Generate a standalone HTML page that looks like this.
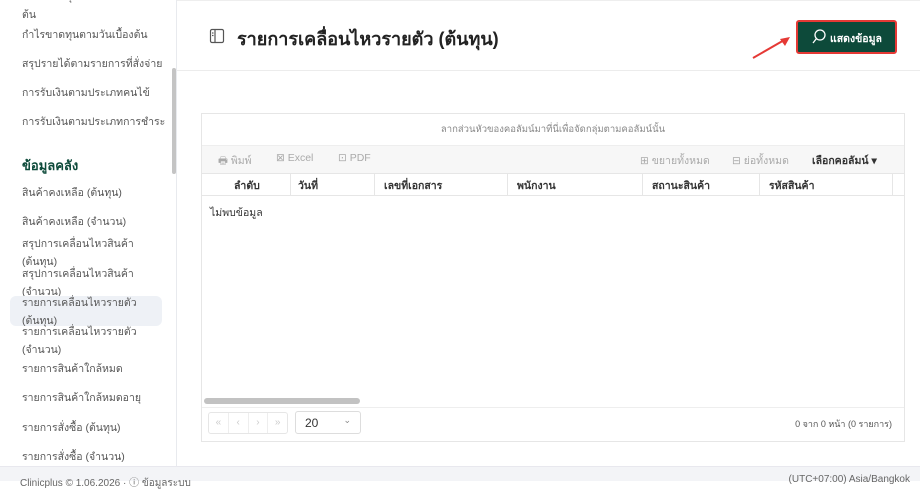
<!DOCTYPE html>
<html><head><meta charset="utf-8"><style>
*{box-sizing:border-box;margin:0;padding:0}
body{width:920px;height:481px;overflow:hidden;background:#fff;font-family:"Liberation Sans",sans-serif;position:relative;color:#333}
.side{position:absolute;left:0;top:0;width:177px;height:466px;border-right:1px solid #e8eaee;background:#fff}
.side .it{position:absolute;left:22px;font-size:10.5px;color:#555;line-height:18px}
.side .hd{position:absolute;left:22px;top:155px;font-size:13px;font-weight:bold;color:#0d4a3a}
.sel{position:absolute;left:10px;top:296px;width:152px;height:30px;background:#eef1f6;border-radius:6px}
.sb{position:absolute;left:172px;top:68px;width:4px;height:106px;background:#c4c4c4;border-radius:2px}
.hdr{position:absolute;left:177px;top:0;right:0;height:71px;border-bottom:1px solid #ececec;border-top:1px solid #eee}
.title{position:absolute;left:237px;top:24px;font-size:18px;font-weight:bold;color:#222}
.btn{position:absolute;left:796px;top:20px;width:101px;height:34px;background:#0d4a3a;border:2px solid #e53935;border-radius:3px;color:#fff;font-size:10.5px;font-weight:bold;padding:8px 0 0 32px}
.tbl{position:absolute;left:201px;top:113px;width:704px;height:329px;border:1px solid #e6e6e6}
.grp{height:32px;border-bottom:1px solid #eee;text-align:center;font-size:9.5px;color:#888;line-height:32px}
.tb{height:27px;background:#f7f7f7;font-size:10.5px;color:#aaa;position:relative}
.tb span{position:absolute;top:6px}
.th{height:23px;border-top:1px solid #e6e6e6;border-bottom:1px solid #e6e6e6;position:relative;font-size:10.5px;font-weight:bold;color:#333}
.th span{position:absolute;top:3px}
.th i{position:absolute;top:0;width:1px;height:22px;background:#e6e6e6}
.foot{position:absolute;left:0;top:466px;width:920px;height:15px;background:#f3f4f7;border-top:1px solid #e8e8ee;font-size:10px;color:#666}
</style></head><body>
<div class="side">
<div class="it" style="top:-12px">กำไรขาดทุนตามรายการเบื้อง<br>ต้น</div>
<div class="it" style="top:26px">กำไรขาดทุนตามวันเบื้องต้น</div>
<div class="it" style="top:55px">สรุปรายได้ตามรายการที่สั่งจ่าย</div>
<div class="it" style="top:84px">การรับเงินตามประเภทคนไข้</div>
<div class="it" style="top:113px">การรับเงินตามประเภทการชำระ</div>
<div class="hd">ข้อมูลคลัง</div>
<div class="it" style="top:184px">สินค้าคงเหลือ (ต้นทุน)</div>
<div class="it" style="top:213px">สินค้าคงเหลือ (จำนวน)</div>
<div class="it" style="top:235px">สรุปการเคลื่อนไหวสินค้า<br>(ต้นทุน)</div>
<div class="it" style="top:265px">สรุปการเคลื่อนไหวสินค้า<br>(จำนวน)</div>
<div class="sel"></div>
<div class="it" style="top:294px">รายการเคลื่อนไหวรายตัว<br>(ต้นทุน)</div>
<div class="it" style="top:323px">รายการเคลื่อนไหวรายตัว<br>(จำนวน)</div>
<div class="it" style="top:360px">รายการสินค้าใกล้หมด</div>
<div class="it" style="top:389px">รายการสินค้าใกล้หมดอายุ</div>
<div class="it" style="top:419px">รายการสั่งซื้อ (ต้นทุน)</div>
<div class="it" style="top:448px">รายการสั่งซื้อ (จำนวน)</div>
<div class="sb"></div>
</div>
<div class="hdr"></div>
<svg style="position:absolute;left:209px;top:28px" width="16" height="16" viewBox="0 0 16 16" fill="none" stroke="#555" stroke-width="1.2"><rect x="1.5" y="1.5" width="13" height="13" rx="1.5"/><line x1="6" y1="1.5" x2="6" y2="14.5"/><line x1="3" y1="5" x2="4.5" y2="5"/><line x1="3" y1="7.5" x2="4.5" y2="7.5"/></svg>
<div class="title">รายการเคลื่อนไหวรายตัว (ต้นทุน)</div>
<svg style="position:absolute;left:752px;top:36px" width="40" height="24"><line x1="1" y1="22" x2="34" y2="3" stroke="#e53935" stroke-width="2"/><polygon points="38,1 28,3 33,10" fill="#e53935"/></svg>
<div class="btn">แสดงข้อมูล</div>
<svg style="position:absolute;left:812px;top:29px" width="15" height="15" fill="none" stroke="#fff" stroke-width="1.3"><circle cx="8" cy="6" r="5"/><line x1="4.5" y1="9.5" x2="1" y2="14"/></svg>
<div class="tbl">
<div class="grp">ลากส่วนหัวของคอลัมน์มาที่นี่เพื่อจัดกลุ่มตามคอลัมน์นั้น</div>
<div class="tb"><span style="left:16px">🖶 พิมพ์</span><span style="left:74px">⊠ Excel</span><span style="left:136px">⊡ PDF</span><span style="left:438px">⊞ ขยายทั้งหมด</span><span style="left:530px">⊟ ย่อทั้งหมด</span><span style="left:610px;color:#333;font-weight:bold">เลือกคอลัมน์ ▾</span></div>
<div class="th"><span style="left:32px">ลำดับ</span><i style="left:88px"></i><span style="left:96px">วันที่</span><i style="left:172px"></i><span style="left:182px">เลขที่เอกสาร</span><i style="left:305px"></i><span style="left:315px">พนักงาน</span><i style="left:440px"></i><span style="left:450px">สถานะสินค้า</span><i style="left:557px"></i><span style="left:567px">รหัสสินค้า</span><i style="left:690px"></i></div>
<div style="font-size:10.5px;padding:8px 8px;color:#333">ไม่พบข้อมูล</div>
<div style="position:absolute;left:2px;top:284px;width:156px;height:6px;border-radius:3px;background:#c2c2c2"></div>
<div style="position:absolute;left:0;top:293px;width:702px;height:1px;background:#eee"></div>
</div>
<div style="position:absolute;left:208px;top:412px;width:80px;height:22px;border:1px solid #e6e6e6;border-radius:3px;font-size:10px;color:#ccc;display:flex"><span style="flex:1;text-align:center;line-height:20px;border-right:1px solid #eee">«</span><span style="flex:1;text-align:center;line-height:20px;border-right:1px solid #eee">‹</span><span style="flex:1;text-align:center;line-height:20px;border-right:1px solid #eee">›</span><span style="flex:1;text-align:center;line-height:20px">»</span></div>
<div style="position:absolute;left:295px;top:411px;width:66px;height:23px;border:1px solid #ddd;border-radius:3px;font-size:12px;padding:4px 9px">20<span style="position:absolute;right:9px;top:3px;font-size:9px;color:#888">⌄</span></div>
<div style="position:absolute;right:28px;top:417px;font-size:9px;color:#555">0 จาก 0 หน้า (0 รายการ)</div>
<div class="foot"><span style="position:absolute;left:20px;top:7px">Clinicplus © 1.06.2026 · ⓘ ข้อมูลระบบ</span><span style="position:absolute;right:10px;top:7px">(UTC+07:00) Asia/Bangkok</span></div>
</body></html>
